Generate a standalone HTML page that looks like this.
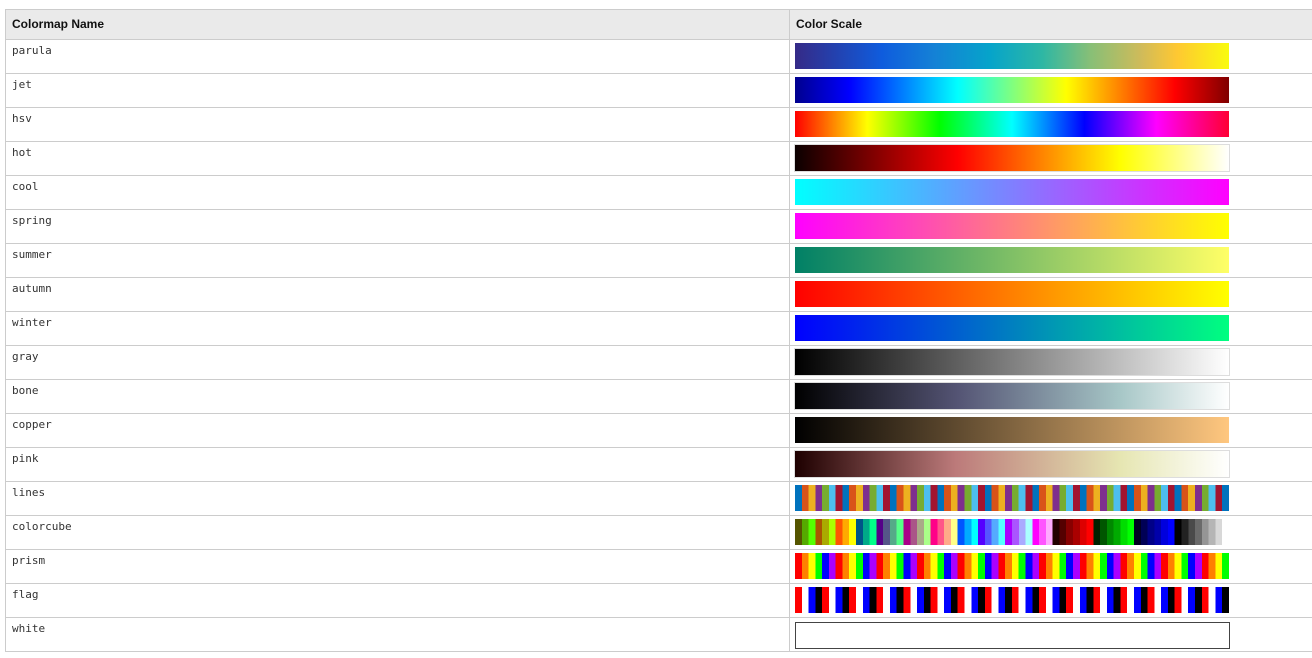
<!DOCTYPE html>
<html><head><meta charset="utf-8"><style>
body{margin:0;background:#fff;width:1312px;height:658px;overflow:hidden}
table{position:absolute;left:5px;top:9px;border-collapse:collapse;width:1320px}
td,th{border:1px solid #ccc;padding:0;vertical-align:top}
th{background:#eaeaea;height:29px;text-align:left;font:bold 12px "Liberation Sans",sans-serif;color:#111;padding-left:6px;line-height:29px}
td{height:33px}
td.n{width:777px;font:11px "DejaVu Sans Mono","Liberation Mono",monospace;color:#333;padding:4px 0 0 6px;height:29px}
.b{margin:3px 0 0 5px;width:434px;height:26px}
</style></head><body>
<table>
<tr><th>Colormap Name</th><th>Color Scale</th></tr>
<tr><td class="n">parula</td><td><div class="b" style="background:linear-gradient(90deg,#352a87,#0f5cdd 20%,#1481d6 32%,#06a4ca 45%,#2eb7a4 57%,#87bf77 68%,#d1bb59 80%,#fec832 88%,#f9fb0e)"></div></td></tr>
<tr><td class="n">jet</td><td><div class="b" style="background:linear-gradient(90deg,#00008f,#0000ff 12.5%,#00ffff 37.5%,#ffff00 62.5%,#ff0000 87.5%,#800000)"></div></td></tr>
<tr><td class="n">hsv</td><td><div class="b" style="background:linear-gradient(90deg,#f00,#ff0 16.7%,#0f0 33.3%,#0ff 50%,#00f 66.7%,#f0f 83.3%,#f03)"></div></td></tr>
<tr><td class="n">hot</td><td><div class="b" style="background:linear-gradient(90deg,#0b0000,#f00 37.5%,#ff0 75%,#fff);outline:1px solid #ddd"></div></td></tr>
<tr><td class="n">cool</td><td><div class="b" style="background:linear-gradient(90deg,#0ff,#f0f)"></div></td></tr>
<tr><td class="n">spring</td><td><div class="b" style="background:linear-gradient(90deg,#f0f,#ff0)"></div></td></tr>
<tr><td class="n">summer</td><td><div class="b" style="background:linear-gradient(90deg,#008066,#ffff66)"></div></td></tr>
<tr><td class="n">autumn</td><td><div class="b" style="background:linear-gradient(90deg,#f00,#ff0)"></div></td></tr>
<tr><td class="n">winter</td><td><div class="b" style="background:linear-gradient(90deg,#00f,#00ff80)"></div></td></tr>
<tr><td class="n">gray</td><td><div class="b" style="background:linear-gradient(90deg,#000,#fff);outline:1px solid #ddd"></div></td></tr>
<tr><td class="n">bone</td><td><div class="b" style="background:linear-gradient(90deg,#000,#545474 37.5%,#a7c7c7 75%,#fff);outline:1px solid #ddd"></div></td></tr>
<tr><td class="n">copper</td><td><div class="b" style="background:linear-gradient(90deg,#000,#ffc77f)"></div></td></tr>
<tr><td class="n">pink</td><td><div class="b" style="background:linear-gradient(90deg,#1e0000,#bc7a7a 37%,#e6e6b2 75%,#fff);outline:1px solid #ddd"></div></td></tr>
<tr><td class="n">lines</td><td><div class="b" style="background:repeating-linear-gradient(90deg,#0072bd 0 6.78px,#d95319 6.78px 13.56px,#edb120 13.56px 20.34px,#7e2f8e 20.34px 27.12px,#77ac30 27.12px 33.9px,#4dbeee 33.9px 40.68px,#a2142f 40.68px 47.46px)"></div></td></tr>
<tr><td class="n">colorcube</td><td><div class="b" style="background:linear-gradient(90deg,#550 0 1.56%,#5a0 0 3.12%,#5f0 0 4.69%,#a50 0 6.25%,#aa0 0 7.81%,#af0 0 9.37%,#f50 0 10.94%,#fa0 0 12.5%,#ff0 0 14.06%,#058 0 15.62%,#0a8 0 17.19%,#0f8 0 18.75%,#508 0 20.31%,#558 0 21.87%,#5a8 0 23.44%,#5f8 0 25%,#a08 0 26.56%,#a58 0 28.12%,#aa8 0 29.69%,#af8 0 31.25%,#f08 0 32.81%,#f58 0 34.37%,#fa8 0 35.94%,#ff8 0 37.5%,#05f 0 39.06%,#0af 0 40.62%,#0ff 0 42.19%,#50f 0 43.75%,#55f 0 45.31%,#5af 0 46.87%,#5ff 0 48.44%,#a0f 0 50%,#a5f 0 51.56%,#aaf 0 53.12%,#aff 0 54.69%,#f0f 0 56.25%,#f5f 0 57.81%,#faf 0 59.37%,#200 0 60.94%,#500 0 62.5%,#800 0 64.06%,#a00 0 65.62%,#d00 0 67.19%,#f00 0 68.75%,#020 0 70.31%,#050 0 71.87%,#080 0 73.44%,#0a0 0 75%,#0d0 0 76.56%,#0f0 0 78.12%,#002 0 79.69%,#005 0 81.25%,#008 0 82.81%,#00a 0 84.37%,#00d 0 85.94%,#00f 0 87.5%,#000 0 89.06%,#222 0 90.62%,#4a4a4a 0 92.19%,#6a6a6a 0 93.75%,#959595 0 95.31%,#b5b5b5 0 96.87%,#d8d8d8 0 98.44%,#fff 0)"></div></td></tr>
<tr><td class="n">prism</td><td><div class="b" style="background:repeating-linear-gradient(90deg,#f00 0 6.78px,#ff8000 6.78px 13.56px,#ff0 13.56px 20.34px,#0f0 20.34px 27.12px,#00f 27.12px 33.9px,#a0f 33.9px 40.68px)"></div></td></tr>
<tr><td class="n">flag</td><td><div class="b" style="background:repeating-linear-gradient(90deg,#f00 0 6.78px,#fff 6.78px 13.56px,#00f 13.56px 20.34px,#000 20.34px 27.12px)"></div></td></tr>
<tr><td class="n">white</td><td><div class="b" style="background:#fff;border:1px solid #444;width:433px;height:25px;margin-top:4px"></div></td></tr>
</table>
</body></html>
